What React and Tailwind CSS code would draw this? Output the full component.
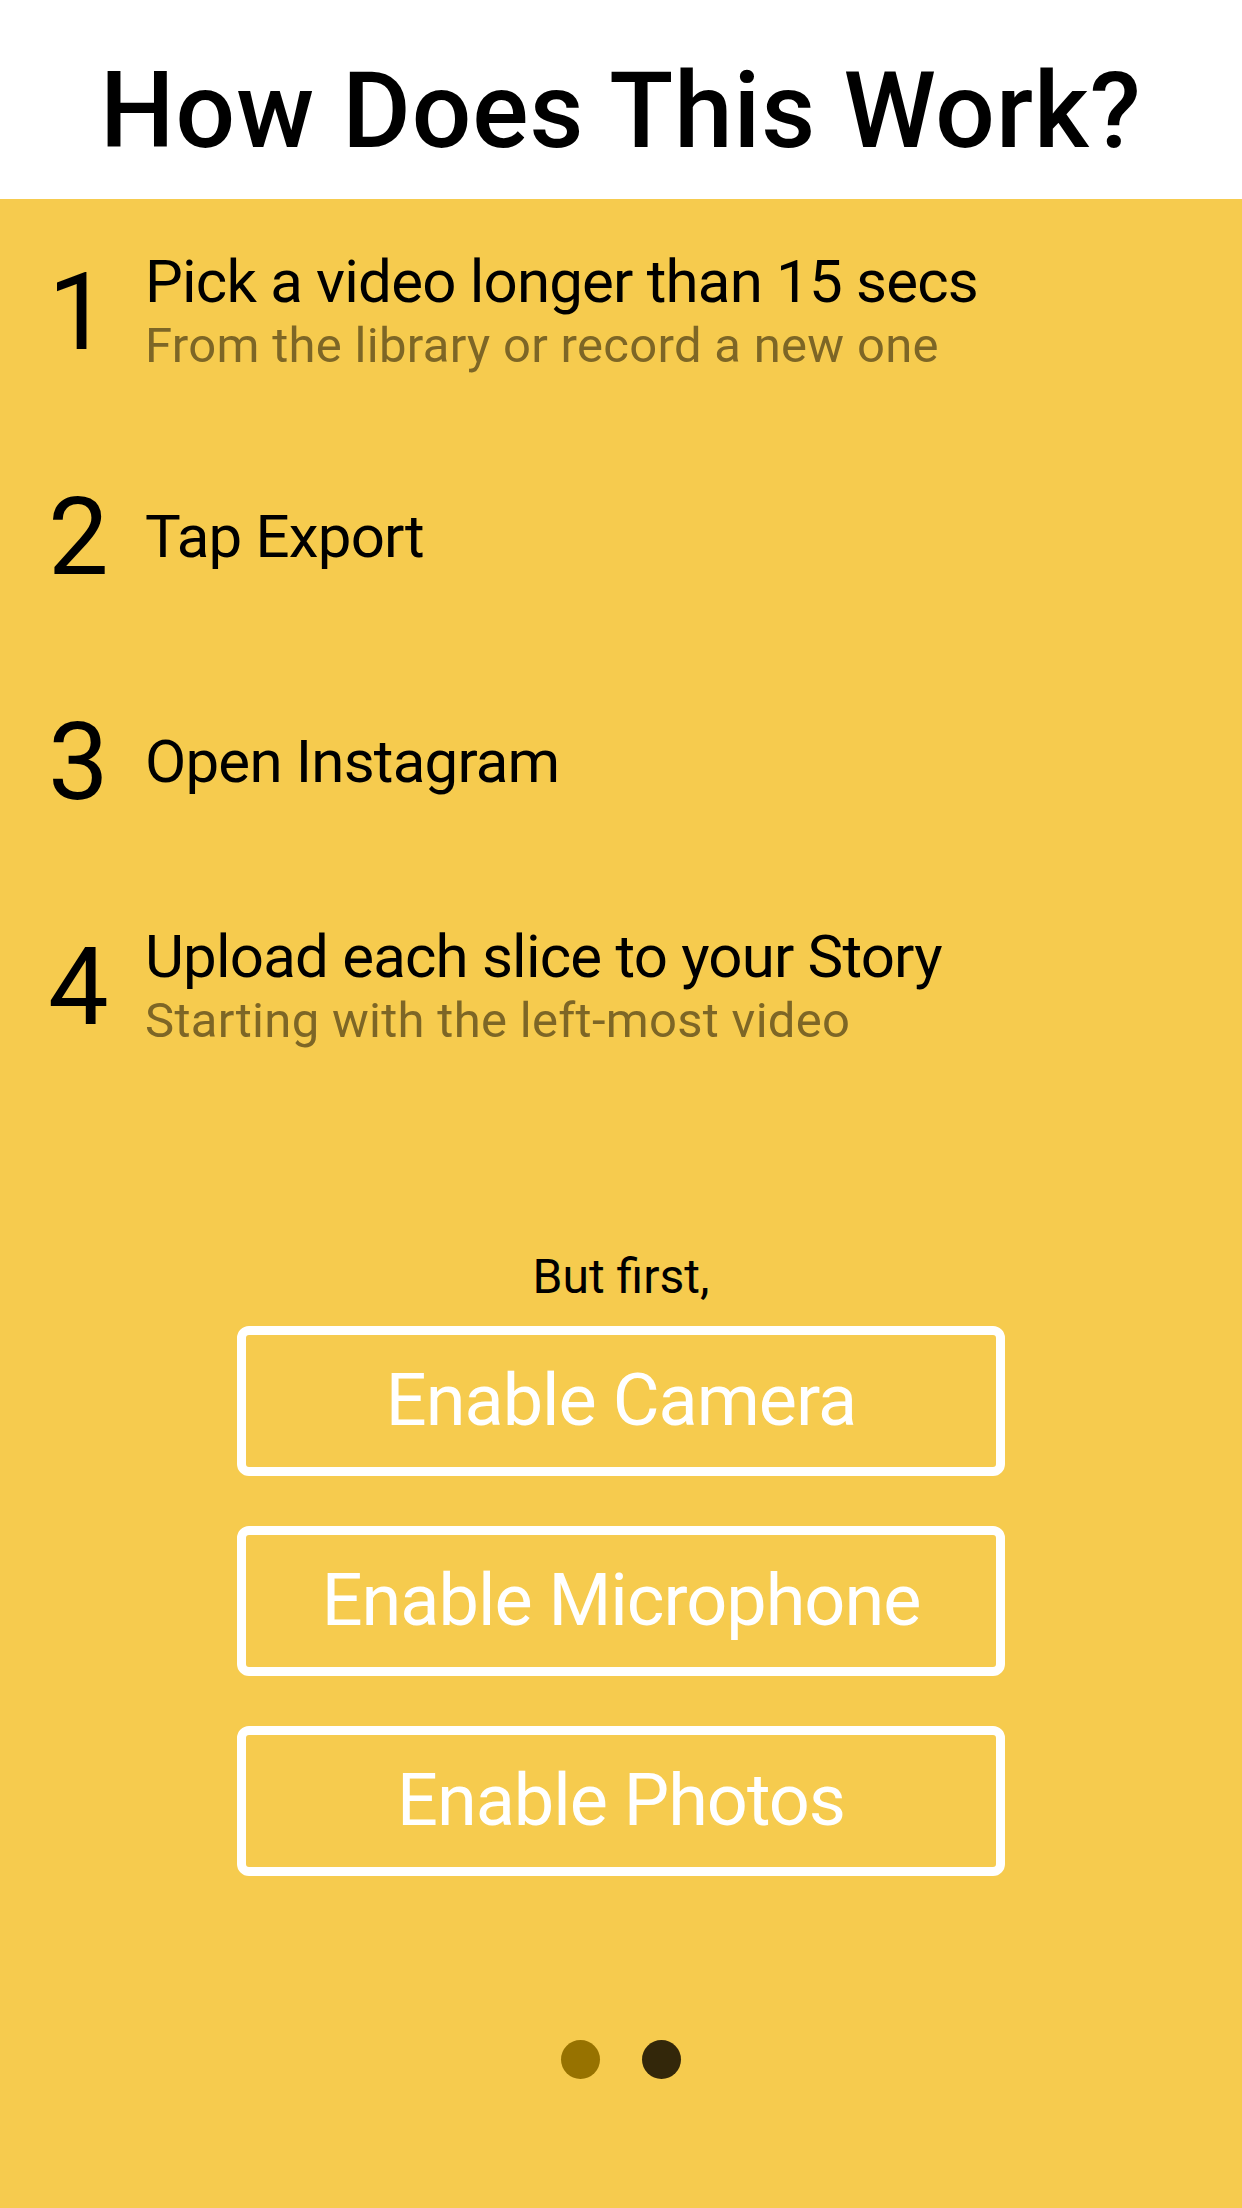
export default function App() {
  const steps = [
    { n: "1", title: "Pick a video longer than 15 secs", sub: "From the library or record a new one" },
    { n: "2", title: "Tap Export" },
    { n: "3", title: "Open Instagram" },
    { n: "4", title: "Upload each slice to your Story", sub: "Starting with the left-most video" },
  ];
  const buttons = ["Enable Camera", "Enable Microphone", "Enable Photos"];
  return (
    <div
      className="w-[1242px] h-[2208px] bg-[#F6CB4E] flex flex-col overflow-hidden"
      style={{ fontFamily: "Roboto, 'Noto Sans', sans-serif" }}
    >
      <header className="h-[199px] bg-white flex items-center justify-center shrink-0">
        <h1 className="text-[105px] leading-none text-black font-medium tracking-[1px] pt-[24px]">How Does This Work?</h1>
      </header>
      <div className="flex flex-col">
        {steps.map((s) => (
          <div key={s.n} className="h-[225px] flex items-center pl-[48px]">
            <div className="w-[97px] text-[108px] leading-none text-black">{s.n}</div>
            <div className="flex flex-col">
              <div className="text-[60px] leading-[66px] text-black tracking-[-0.8px]">{s.title}</div>
              {s.sub && (
                <div className="text-[49px] leading-[58px] text-[#7d6626] tracking-[0.3px] mt-[2px]">{s.sub}</div>
              )}
            </div>
          </div>
        ))}
      </div>
      <div className="flex flex-col items-center mt-[150px]">
        <p className="text-[48px] leading-[56px] text-black">But first,</p>
        <div className="flex flex-col gap-[50px] mt-[21px]">
          {buttons.map((b) => (
            <button
              key={b}
              className="w-[768px] h-[150px] border-[9px] border-white rounded-[12px] flex items-center justify-center text-white text-[72px] leading-none tracking-[-1px]"
            >
              {b}
            </button>
          ))}
        </div>
        <div className="flex gap-[42px] mt-[164px]">
          <div className="w-[39px] h-[39px] rounded-full bg-[#977200]" />
          <div className="w-[39px] h-[39px] rounded-full bg-[#33270a]" />
        </div>
      </div>
    </div>
  );
}
